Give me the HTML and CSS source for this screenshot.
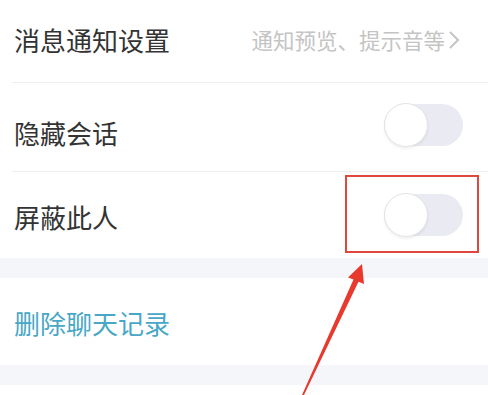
FILE: index.html
```html
<!DOCTYPE html>
<html lang="zh-CN">
<head>
<meta charset="utf-8">
<link rel="stylesheet" href="styles.css">
</head>
<body>
<div class="page">
  <div class="group">
    <div class="row row-first">
      <span class="label">消息通知设置</span>
      <span class="hint">通知预览、提示音等<svg class="chev" width="12" height="20" viewBox="0 0 12 20"><polyline points="2,2 10,10 2,18" fill="none" stroke="#c4c4c4" stroke-width="2"/></svg></span>
    </div>
    <div class="row row-second">
      <span class="label">隐藏会话</span>
      <span class="toggle"><span class="knob"></span></span>
    </div>
    <div class="row row-third">
      <span class="label">屏蔽此人</span>
      <span class="toggle"><span class="knob"></span></span>
    </div>
  </div>
  <div class="band"></div>
  <div class="row row-delete">
    <span class="label danger">删除聊天记录</span>
  </div>
  <div class="band"></div>
  <div class="tail"></div>

  <div class="highlight"></div>
  <svg class="arrow" width="488" height="395" viewBox="0 0 488 395">
    <polygon points="362,264 348,277.5 353.5,279.5 302,395 304,395 358.5,281.8 364,284" fill="#e8392f"/>
  </svg>
</div>
</body>
</html>
```
FILE: styles.css
```css
html, body {
  margin: 0;
  padding: 0;
  background: #ffffff;
}
.page {
  position: relative;
  width: 488px;
  height: 395px;
  overflow: hidden;
  font-family: "Noto Sans CJK SC", "Noto Sans", sans-serif;
}
.row {
  display: flex;
  align-items: center;
  justify-content: space-between;
  padding-left: 14px;
  padding-right: 25px;
  box-sizing: border-box;
  position: relative;
}
.group .row::after {
  content: "";
  position: absolute;
  left: 12px;
  right: 0;
  bottom: 0;
  height: 1px;
  background: #eeeeee;
}
.group .row:last-child::after {
  display: none;
}
.row-first {
  height: 83px;
  padding-bottom: 3px;
  padding-right: 28px;
}
.row-second {
  height: 89px;
}
.row-third {
  height: 86px;
}
.row-delete {
  height: 87px;
}
.label {
  font-size: 26px;
  line-height: 1;
  color: #333333;
}
.row-second .label {
  position: relative;
  top: 5px;
}
.row-third .label {
  position: relative;
  top: 2px;
}
.danger {
  color: #48a7c6;
  position: relative;
  top: 1px;
}
.hint {
  display: flex;
  align-items: center;
  font-size: 21.5px;
  line-height: 1;
  color: #c4c4c4;
  gap: 3px;
}
.toggle {
  position: relative;
  width: 79px;
  height: 42px;
  border-radius: 21px;
  background: #e9eaf2;
  box-sizing: border-box;
}
.row-second .toggle {
  top: -3px;
}
.knob {
  position: absolute;
  left: 0;
  top: -1px;
  width: 44px;
  height: 44px;
  border-radius: 50%;
  background: #ffffff;
  box-sizing: border-box;
  border: 1px solid #e4e4e8;
  box-shadow: 0 2px 3px rgba(0, 0, 0, 0.06);
}
.band {
  height: 20px;
  background: #f4f6f9;
}
.tail {
  height: 10px;
}
.highlight {
  position: absolute;
  left: 345px;
  top: 175px;
  width: 134px;
  height: 78px;
  box-sizing: border-box;
  border: 2px solid #e0473e;
}
.arrow {
  position: absolute;
  left: 0;
  top: 0;
}
```
